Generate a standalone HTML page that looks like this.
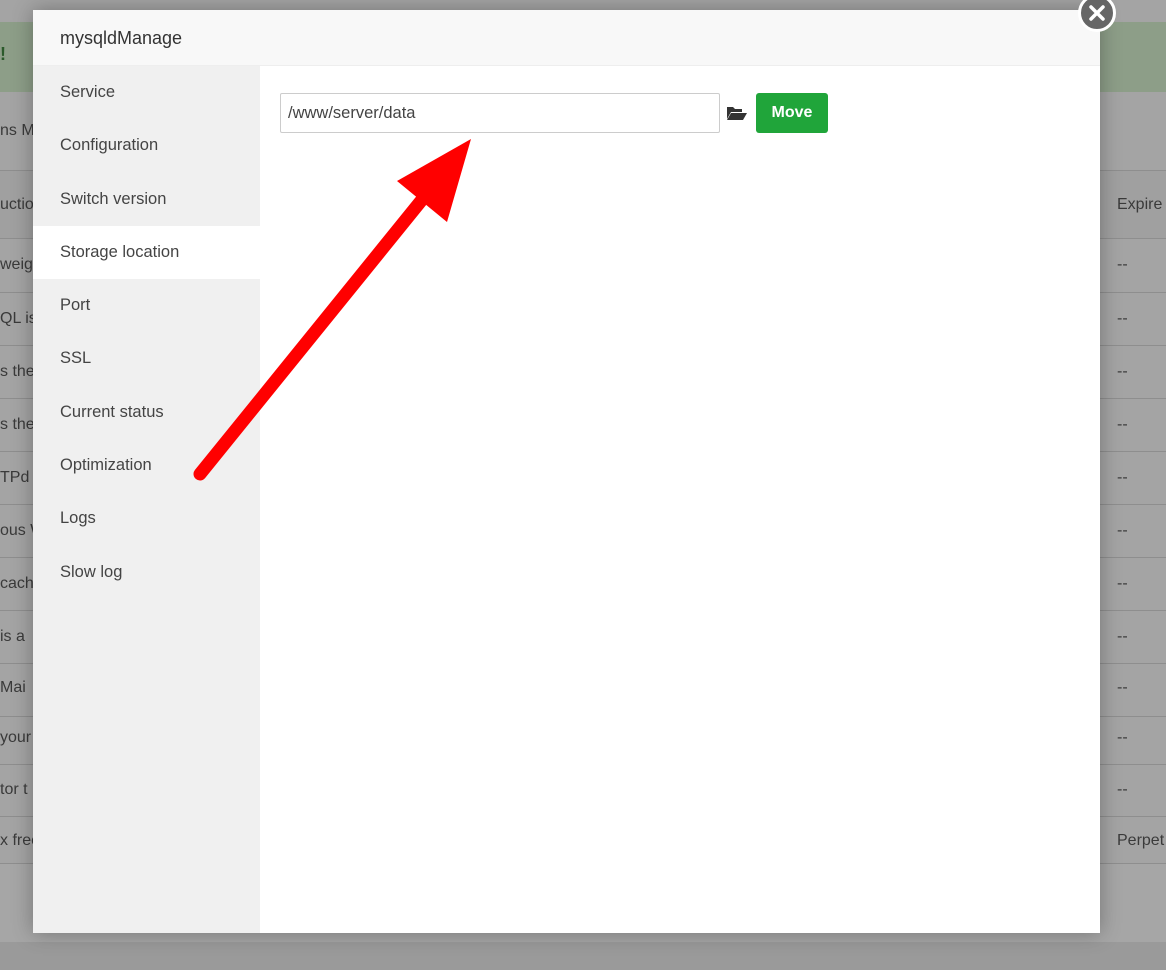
<!DOCTYPE html>
<html><head><meta charset="utf-8"><style>
*{margin:0;padding:0;box-sizing:border-box}
body{width:1166px;height:970px;overflow:hidden;background:#a4a4a4;font-family:"Liberation Sans",sans-serif;position:relative;color:#333}
.banner{position:absolute;left:0;top:22px;width:1166px;height:70px;background:#8d9e88}
.row{position:absolute;left:0;width:1166px;border-top:1px solid #8e8e8e;font-size:16px;color:#3a3a3a}
.row span{position:absolute}
.lt{left:0}
.rt{left:1117px}
.modal{position:absolute;left:33px;top:10px;width:1067px;height:923px;background:#fff;box-shadow:0 0 20px rgba(0,0,0,.3)}
.hd{height:56px;background:#f8f8f8;border-bottom:1px solid #eee;font-size:18px;line-height:56px;padding-left:27px;color:#333}
.side{position:absolute;left:0;top:56px;width:227px;bottom:0;background:#f0f0f0}
.side div{height:53.3px;line-height:53px;padding-left:27px;font-size:16.5px;color:#444}
.side .act{background:#fff}
.inp{position:absolute;left:247px;top:83px;width:440px;height:40px;border:1px solid #ccc;border-radius:2px;font-size:16.5px;line-height:38px;padding-left:7px;color:#444}
.btn{position:absolute;left:723px;top:83px;width:72px;height:40px;background:#20a53a;border-radius:3px;color:#fff;font-size:16px;line-height:40px;text-align:center;font-weight:bold}
.close{position:absolute;left:1045px;top:-16px;width:38px;height:38px;border-radius:50%;background:#666;border:3px solid #fff;}
</style></head><body>
<div class="banner"></div>
<div style="position:absolute;left:0;top:44px;font-weight:bold;color:#2b5a2b;font-size:18px">!</div>
<div class="row" style="top:92px;border:none;height:78px"><span class="lt" style="top:30px">ns M</span></div>
<div class="row" style="top:170px;height:68px;background:#a0a0a0"><span class="lt" style="top:25px">uctio</span><span class="rt" style="top:25px">Expire</span></div>
<div class="row" style="top:238px"><span class="lt" style="top:17px">weig</span><span class="rt" style="top:17px">--</span></div>
<div class="row" style="top:292px"><span class="lt" style="top:17px">QL is</span><span class="rt" style="top:17px">--</span></div>
<div class="row" style="top:345px"><span class="lt" style="top:17px">s the</span><span class="rt" style="top:17px">--</span></div>
<div class="row" style="top:398px"><span class="lt" style="top:17px">s the</span><span class="rt" style="top:17px">--</span></div>
<div class="row" style="top:451px"><span class="lt" style="top:17px">TPd</span><span class="rt" style="top:17px">--</span></div>
<div class="row" style="top:504px"><span class="lt" style="top:17px">ous W</span><span class="rt" style="top:17px">--</span></div>
<div class="row" style="top:557px"><span class="lt" style="top:17px">cach</span><span class="rt" style="top:17px">--</span></div>
<div class="row" style="top:610px"><span class="lt" style="top:17px">is a</span><span class="rt" style="top:17px">--</span></div>
<div class="row" style="top:663px"><span class="lt" style="top:15px">Mai</span><span class="rt" style="top:15px">--</span></div>
<div class="row" style="top:716px"><span class="lt" style="top:12px">your</span><span class="rt" style="top:12px">--</span></div>
<div class="row" style="top:764px"><span class="lt" style="top:16px">tor t</span><span class="rt" style="top:16px">--</span></div>
<div class="row" style="top:816px"><span class="lt" style="top:15px">x free</span><span class="rt" style="top:15px">Perpet</span></div>
<div class="row" style="top:863px;height:80px;background:#a6a6a6"></div>
<div style="position:absolute;left:0;top:942px;width:1166px;height:28px;background:#9a9a9a"></div>
<div class="modal">
<div class="hd">mysqldManage</div>
<div class="side">
<div>Service</div><div>Configuration</div><div>Switch version</div><div class="act">Storage location</div><div>Port</div><div>SSL</div><div>Current status</div><div>Optimization</div><div>Logs</div><div>Slow log</div>
</div>
<div class="inp">/www/server/data</div>
<svg style="position:absolute;left:693px;top:94px" width="22" height="18" viewBox="0 0 22 18"><path d="M1 3h6l2 2h7v3H5L1 15z" fill="#333"/><path d="M5 9h16l-4 7H1z" fill="#333"/></svg>
<div class="btn">Move</div>
<div class="close"><svg width="32" height="32" viewBox="0 0 32 32"><path d="M10 10L22 22M22 10L10 22" stroke="#fff" stroke-width="3.5" stroke-linecap="round"/></svg></div>
</div>
<svg style="position:absolute;left:0;top:0" width="1166" height="970"><line x1="200" y1="474" x2="425" y2="196" stroke="#f00" stroke-width="13" stroke-linecap="round"/><polygon points="471,139 397,181 447,222" fill="#f00"/></svg>
</body></html>
